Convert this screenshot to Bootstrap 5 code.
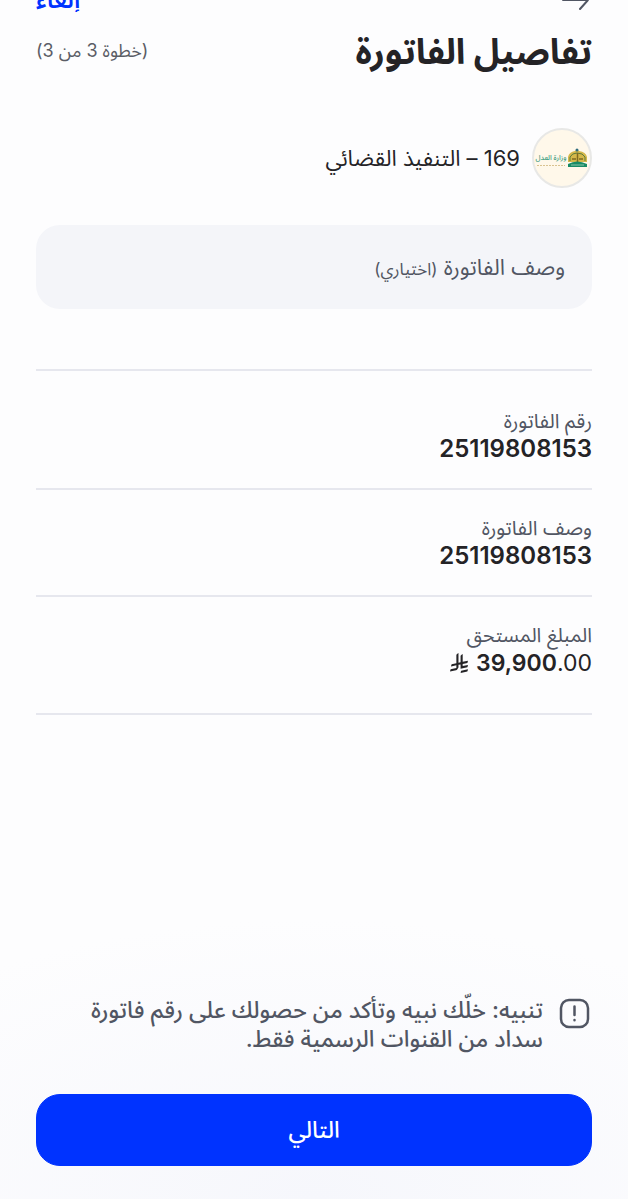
<!DOCTYPE html>
<html lang="ar" dir="rtl">
<head>
<meta charset="utf-8">
<meta name="viewport" content="width=device-width, initial-scale=1">
<title>تفاصيل الفاتورة</title>
<link rel="stylesheet" href="https://cdn.jsdelivr.net/npm/bootstrap@5.3.0/dist/css/bootstrap.min.css">
<style>
  :root { --ink: #242326; --slate: #515663; --brand: #0033ff; --line: #e6e7ee; }
  body {
    font-family: Inter, "Noto Sans Arabic", "DejaVu Sans", sans-serif;
    color: var(--ink);
    background: radial-gradient(ellipse 90% 280px at 50% 100%, #f6f7fc, #fdfdfe) #fdfdfe;
  }
  .screen { padding: 0 36px 33px; }
  .top-bar { height: 12px; overflow: hidden; }
  .cancel-link { color: var(--brand); font-size: 24px; line-height: 24px; font-weight: 600; }
  .page-title { font-size: 35px; line-height: 46px; font-weight: 700; }
  .step-note { font-size: 18px; line-height: 24px; color: #5b5d66; }
  .biller { margin-top: 54px; font-size: 22px; line-height: 32px; }
  .biller-logo { width: 60px; height: 60px; border: 2px solid #e8e8e6; background: #fff8ea; }
  .field { margin-top: 37px; min-height: 84px; padding: 0 27px; border-radius: 24px; background: #f4f5f9; color: var(--slate); font-size: 22px; }
  .field-hint { font-size: 17px; }
  .field input { min-width: 0; color: var(--ink); }
  .bill-list { margin-top: 60px; border-top: 2px solid var(--line); }
  .bill-row { padding: 36px 0 25px; border-bottom: 2px solid var(--line); }
  .bill-row + .bill-row { padding-top: 24px; }
  .bill-row:last-child { padding-bottom: 36px; }
  .bill-row dt { font-size: 20px; line-height: 28px; font-weight: 400; color: var(--slate); }
  .bill-row dd { font-size: 24px; line-height: 28px; font-weight: 600; }
  .bill-row .amount { font-size: 23px; }
  .notice { color: var(--slate); font-size: 23px; line-height: 29px; font-weight: 500; gap: 16px; padding-inline-end: 36px; }
  .next-btn { margin-top: 40px; height: 72px; border-radius: 24px; font-size: 23px; font-weight: 500; --bs-btn-bg: var(--brand); --bs-btn-border-color: var(--brand); --bs-btn-hover-bg: #002be0; }
</style>
</head>
<body>
<div class="screen min-vh-100 d-flex flex-column">
  <header>
    <nav class="top-bar d-flex justify-content-between align-items-end">
      <a href="#" aria-label="رجوع" class="d-flex"><svg width="32" height="24" viewBox="0 0 32 24" fill="none" stroke="#515663" stroke-width="2" stroke-linecap="round" stroke-linejoin="round"><path d="M3 12H28M19 3L28 12L20 21"/></svg></a>
      <a href="#" class="cancel-link text-decoration-none">إلغاء</a>
    </nav>
    <div class="d-flex justify-content-between align-items-center pt-3">
      <h1 class="page-title mb-0">تفاصيل الفاتورة</h1>
      <span class="step-note">(خطوة 3 من 3)</span>
    </div>
  </header>
  <main class="flex-grow-1">
    <div class="biller d-flex align-items-center gap-2">
      <span class="biller-logo rounded-circle flex-shrink-0">
        <svg class="d-block" width="56" height="56" viewBox="0 0 56 56" aria-hidden="true">
          <text x="17" y="30" text-anchor="middle" font-size="7" font-weight="500" fill="#3d9c82" direction="rtl">وزارة العدل</text>
          <path d="M3 35.500H31" stroke="#d9c391" stroke-width="1" stroke-dasharray="2 1"/>
          <path d="M34 32V27Q35 22 41 21L43 19L45 21Q52 22 53 27V32Z" fill="#d5b84a"/>
          <path d="M36 31V27Q38 23 43 23Q49 23 51 27V31" fill="none" stroke="#5c7b3d" stroke-width="1"/>
          <path d="M38 29H42M45 29H49M43.500 23V32" stroke="#806a20" stroke-width="1.500"/>
          <path d="M34 37V34Q43 29 53 34V37Z" fill="#188b66"/>
          <path d="M37 35H50" stroke="#8bc5aa" stroke-width="1"/>
          <circle cx="43" cy="20" r="1.500" fill="#2d6b7d"/>
        </svg>
      </span>
      <span class="px-1">169 – التنفيذ القضائي</span>
    </div>
    <div class="field d-flex align-items-center">
      <label for="description" class="text-nowrap">وصف الفاتورة <span class="field-hint">(اختياري)</span></label>
      <input id="description" type="text" class="flex-grow-1 border-0 bg-transparent">
    </div>
    <dl class="bill-list mb-4">
      <div class="bill-row"><dt>رقم الفاتورة</dt><dd class="m-0">25119808153</dd></div>
      <div class="bill-row"><dt>وصف الفاتورة</dt><dd class="m-0">25119808153</dd></div>
      <div class="bill-row"><dt>المبلغ المستحق</dt>
        <dd class="amount m-0 d-flex align-items-center gap-2"><span dir="ltr">39,900<span class="fw-normal">.00</span></span>
          <svg role="img" aria-label="ريال" width="18" height="20" viewBox="0 0 1124 1257" fill="currentColor"><path d="M699.600 1113c-20 44.500-33.300 92.800-38.400 143.400l424.500-90.300c20.100-44.400 33.300-92.700 38.400-143.300zM1085.700 895.800c20.100-44.500 33.300-92.800 38.400-143.400l-330.700 70.400V687.600l292.300-62.100c20.100-44.500 33.300-92.800 38.400-143.400l-330.700 70.300V66.100c-50.600 28.500-95.600 66.300-132.200 111v403.400L529 608.600V0c-50.700 28.400-95.700 66.300-132.300 111v525.700l-295.900 62.900c-20 44.400-33.300 92.700-38.400 143.300l334.300-71v170.200L38.400 1018.300C18.300 1062.700 5.100 1111 0 1161.600l375-79.700c30.600-6.300 56.800-24.400 73.900-49.200l68.800-102c7.100-10.500 11.300-23.300 11.300-37v-149.900l132.200-28.200V986z"/></svg></dd></div>
    </dl>
  </main>
  <footer>
    <div class="notice d-flex align-items-start">
      <svg class="flex-shrink-0" width="33" height="36" viewBox="0 0 33 36" fill="none" stroke="currentColor" stroke-width="2.500" stroke-linecap="round" aria-hidden="true"><rect x="2" y="4" width="27" height="27" rx="8"/><path d="M15.500 10.500V19M15.500 24V24.300"/></svg>
      <p class="mb-0">تنبيه: خلّك نبيه وتأكد من حصولك على رقم فاتورة سداد من القنوات الرسمية فقط.</p>
    </div>
    <button type="button" class="btn btn-primary next-btn w-100">التالي</button>
  </footer>
</div>
<script src="https://cdn.jsdelivr.net/npm/bootstrap@5.3.0/dist/js/bootstrap.bundle.min.js"></script>
</body>
</html>
